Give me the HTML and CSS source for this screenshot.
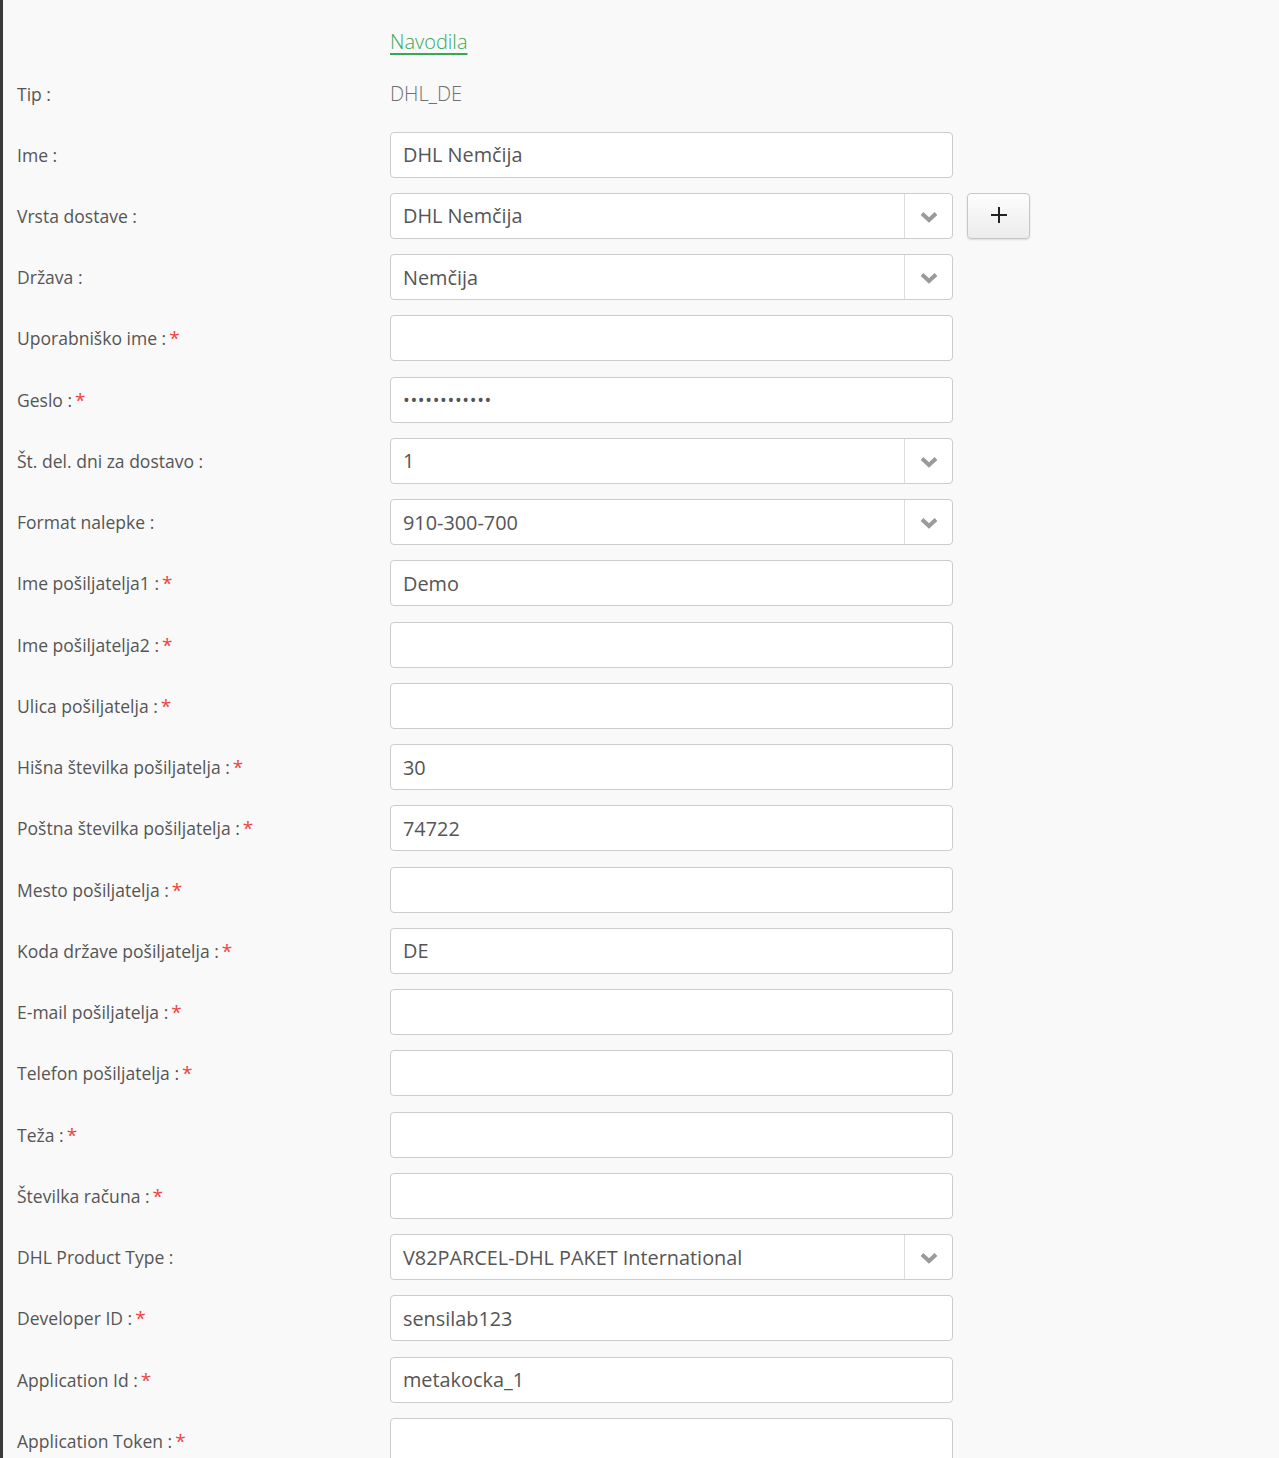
FILE: index.html
```html
<!DOCTYPE html>
<html lang="sl">
<head>
<meta charset="utf-8">
<title>DHL Nemčija</title>
<link rel="stylesheet" href="styles.css">
</head>
<body>
<div class="page">
  <form class="form">
    <div class="row row-nav">
      <div class="label"></div>
      <div class="control"><a class="link" href="#">Navodila</a></div>
    </div>
    <div class="row row-static">
      <div class="label">Tip :</div>
      <div class="control"><span class="static">DHL_DE</span></div>
    </div>
    <div class="row">
      <div class="label">Ime :</div>
      <div class="control"><div class="input">DHL Nemčija</div></div>
    </div>
    <div class="row">
      <div class="label">Vrsta dostave :</div>
      <div class="control">
        <div class="input select"><span class="val">DHL Nemčija</span><span class="arrow"><svg width="18" height="12" viewBox="0 0 18 12"><path d="M2 2.5 L9 9 L16 2.5" fill="none" stroke="#9a9a9a" stroke-width="4"/></svg></span></div>
        <button type="button" class="plus"><svg width="18" height="18" viewBox="0 0 18 18"><path d="M9 1 V17 M1 9 H17" stroke="#222" stroke-width="2"/></svg></button>
      </div>
    </div>
    <div class="row">
      <div class="label">Država :</div>
      <div class="control"><div class="input select"><span class="val">Nemčija</span><span class="arrow"><svg width="18" height="12" viewBox="0 0 18 12"><path d="M2 2.5 L9 9 L16 2.5" fill="none" stroke="#9a9a9a" stroke-width="4"/></svg></span></div></div>
    </div>
    <div class="row">
      <div class="label">Uporabniško ime :<span class="req">*</span></div>
      <div class="control"><div class="input"></div></div>
    </div>
    <div class="row">
      <div class="label">Geslo :<span class="req">*</span></div>
      <div class="control"><div class="input pass">••••••••••••</div></div>
    </div>
    <div class="row">
      <div class="label">Št. del. dni za dostavo :</div>
      <div class="control"><div class="input select"><span class="val">1</span><span class="arrow"><svg width="18" height="12" viewBox="0 0 18 12"><path d="M2 2.5 L9 9 L16 2.5" fill="none" stroke="#9a9a9a" stroke-width="4"/></svg></span></div></div>
    </div>
    <div class="row">
      <div class="label">Format nalepke :</div>
      <div class="control"><div class="input select"><span class="val">910-300-700</span><span class="arrow"><svg width="18" height="12" viewBox="0 0 18 12"><path d="M2 2.5 L9 9 L16 2.5" fill="none" stroke="#9a9a9a" stroke-width="4"/></svg></span></div></div>
    </div>
    <div class="row">
      <div class="label">Ime pošiljatelja1 :<span class="req">*</span></div>
      <div class="control"><div class="input">Demo</div></div>
    </div>
    <div class="row">
      <div class="label">Ime pošiljatelja2 :<span class="req">*</span></div>
      <div class="control"><div class="input"></div></div>
    </div>
    <div class="row">
      <div class="label">Ulica pošiljatelja :<span class="req">*</span></div>
      <div class="control"><div class="input"></div></div>
    </div>
    <div class="row">
      <div class="label">Hišna številka pošiljatelja :<span class="req">*</span></div>
      <div class="control"><div class="input">30</div></div>
    </div>
    <div class="row">
      <div class="label">Poštna številka pošiljatelja :<span class="req">*</span></div>
      <div class="control"><div class="input">74722</div></div>
    </div>
    <div class="row">
      <div class="label">Mesto pošiljatelja :<span class="req">*</span></div>
      <div class="control"><div class="input"></div></div>
    </div>
    <div class="row">
      <div class="label">Koda države pošiljatelja :<span class="req">*</span></div>
      <div class="control"><div class="input">DE</div></div>
    </div>
    <div class="row">
      <div class="label">E-mail pošiljatelja :<span class="req">*</span></div>
      <div class="control"><div class="input"></div></div>
    </div>
    <div class="row">
      <div class="label">Telefon pošiljatelja :<span class="req">*</span></div>
      <div class="control"><div class="input"></div></div>
    </div>
    <div class="row">
      <div class="label">Teža :<span class="req">*</span></div>
      <div class="control"><div class="input"></div></div>
    </div>
    <div class="row">
      <div class="label">Številka računa :<span class="req">*</span></div>
      <div class="control"><div class="input"></div></div>
    </div>
    <div class="row">
      <div class="label">DHL Product Type :</div>
      <div class="control"><div class="input select"><span class="val">V82PARCEL-DHL PAKET International</span><span class="arrow"><svg width="18" height="12" viewBox="0 0 18 12"><path d="M2 2.5 L9 9 L16 2.5" fill="none" stroke="#9a9a9a" stroke-width="4"/></svg></span></div></div>
    </div>
    <div class="row">
      <div class="label">Developer ID :<span class="req">*</span></div>
      <div class="control"><div class="input">sensilab123</div></div>
    </div>
    <div class="row">
      <div class="label">Application Id :<span class="req">*</span></div>
      <div class="control"><div class="input">metakocka_1</div></div>
    </div>
    <div class="row">
      <div class="label">Application Token :<span class="req">*</span></div>
      <div class="control"><div class="input"></div></div>
    </div>
  </form>
</div>
</body>
</html>
```

FILE: styles.css
```css
html, body {
  margin: 0;
  padding: 0;
  background: #f9f9f9;
}
body {
  font-family: "Open Sans", "Liberation Sans", sans-serif;
  color: #555;
  height: 1458px;
  overflow: hidden;
}
.page {
  border-left: 3px solid #3a3a3a;
  min-height: 1458px;
  box-sizing: border-box;
  padding: 26px 0 0 14px;
}
.form {
  display: flex;
  flex-direction: column;
  gap: 15.25px;
}
.row {
  display: flex;
  align-items: center;
  height: 46px;
}
.row-nav { height: 30px; }
.row-static { height: 45px; }
.label {
  width: 373px;
  flex: none;
  font-size: 17.55px;
  font-weight: 400;
  color: #555;
}
.req {
  color: #f2423f;
  margin-left: 3px;
  font-size: 19px;
}
.control {
  display: flex;
  align-items: center;
  gap: 14px;
  height: 100%;
}
.link {
  font-size: 20px;
  font-weight: 300;
  color: #38a856;
  text-decoration: underline;
  text-decoration-thickness: 2px;
  text-underline-offset: 4px;
}
.static {
  font-size: 20px;
  font-weight: 300;
  color: #707070;
}
.input {
  box-sizing: border-box;
  width: 563px;
  height: 46px;
  background: #fff;
  border: 1px solid #ccc;
  border-radius: 4px;
  padding: 0 12px;
  display: flex;
  align-items: center;
  font-size: 19.85px;
  color: #555;
}
.pass { font-size: 18px; letter-spacing: 0.65px; color: #555; }
.select { padding-right: 0; }
.select .val { flex: 1; }
.arrow {
  width: 48px;
  height: 100%;
  border-left: 1px solid #ddd;
  display: flex;
  align-items: center;
  justify-content: center;
  padding-top: 2px;
  box-sizing: border-box;
}
.plus {
  box-sizing: border-box;
  width: 63px;
  height: 46px;
  border: 1px solid #c6c6c6;
  border-radius: 4px;
  background: linear-gradient(#fdfdfd, #ececec);
  box-shadow: 0 1px 2px rgba(0,0,0,0.12);
  padding: 0 0 2px;
  display: flex;
  align-items: center;
  justify-content: center;
}
```
